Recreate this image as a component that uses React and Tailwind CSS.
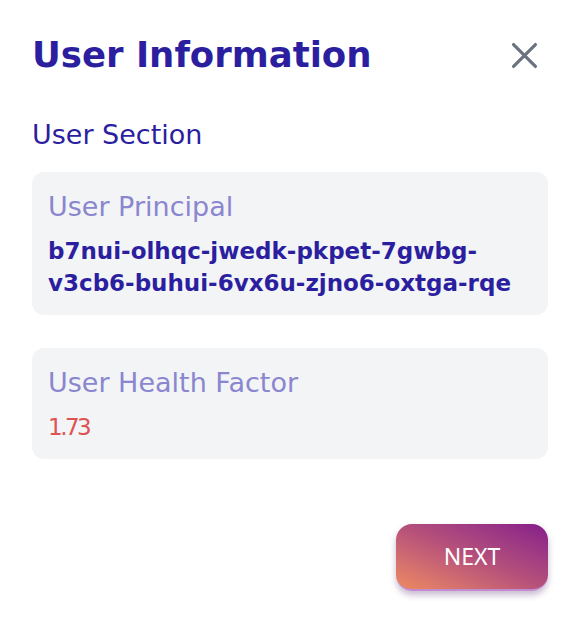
import React from 'react';

// User info modal: principal + health factor, with a gradient "next" button
const CloseIcon = () => (
  <svg width="35" height="35" viewBox="0 0 24 24" fill="none" stroke="#6b7280" strokeWidth="2.2" strokeLinecap="round">
    <path d="M4.5 4.5l15 15M19.5 4.5l-15 15" />
  </svg>
);

const InfoCard = ({ label, children, className }) => (
  <div className={`bg-[#f3f4f6] rounded-[12px] px-4 ${className}`}>
    <p className="text-[27px] leading-[32px] text-[#8a86cf]">{label}</p>
    {children}
  </div>
);

export default function App() {
  return (
    <div className="w-[577px] h-[634px] bg-white pl-8 pr-[29px] pt-[31px] font-['DejaVu_Sans',sans-serif]">
      {/* Header */}
      <div className="flex items-center justify-between h-12">
        <h1 className="text-[35.5px] leading-[48px] font-bold text-[#2b1fa0]">User Information</h1>
        <button className="mr-[6px]">
          <CloseIcon />
        </button>
      </div>

      <h2 className="mt-[38px] text-[27px] leading-[36px] text-[#2b1fa0]">User Section</h2>

      <InfoCard label="User Principal" className="mt-[19px] pt-[19px] pb-[16px]">
        <p className="mt-[12px] text-[23px] leading-[32px] font-bold text-[#2b1fa0]">
          b7nui-olhqc-jwedk-pkpet-7gwbg-<br />v3cb6-buhui-6vx6u-zjno6-oxtga-rqe
        </p>
      </InfoCard>

      <InfoCard label="User Health Factor" className="mt-[33px] pt-[19px] pb-[17px]">
        <p className="mt-[13px] text-[23px] leading-[30px] tracking-[-2.5px] text-[#e05252]">1.73</p>
      </InfoCard>

      {/* Footer */}
      <div className="flex justify-end mt-[65px]">
        <button className="w-[152px] h-[67px] rounded-[16px] bg-gradient-to-tr from-[#ee8a5e] via-[#b6507a] to-[#861a8a] text-white text-[23px] font-['Noto_Sans',sans-serif] shadow-[0_4px_6px_rgba(100,60,120,0.35)] border-b-2 border-[#c28bd0]">
          NEXT
        </button>
      </div>
    </div>
  );
}
